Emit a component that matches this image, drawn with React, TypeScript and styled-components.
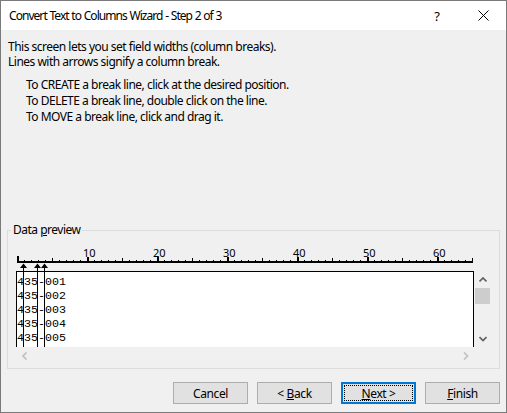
import React from "react";
import styled, { createGlobalStyle } from "styled-components";

const GlobalStyle = createGlobalStyle`
  html, body { margin: 0; padding: 0; background: #ffffff; }
  body { font-family: "Noto Sans", "Segoe UI", sans-serif; font-size: 12px; letter-spacing: -0.5px; color: #000; }
  * { box-sizing: border-box; }
`;

const Window = styled.div`
  width: 507px;
  height: 413px;
  border: 1px solid #7a7a7a;
  background: #f0f0f0;
  display: flex;
  flex-direction: column;
`;

const TitleBar = styled.div`
  height: 29px;
  flex-shrink: 0;
  background: #ffffff;
  display: flex;
  align-items: center;
`;

const Title = styled.div`
  flex: 1;
  padding-left: 8px;
  font-size: 12px;
  letter-spacing: -0.95px;
  word-spacing: 0.5px;
  white-space: nowrap;
`;

const TitleButton = styled.div`
  width: 46px;
  height: 29px;
  display: flex;
  align-items: center;
  justify-content: center;
  font-size: 13px;
  letter-spacing: 0;
  color: #000;
`;

const Content = styled.div`
  flex: 1;
  display: flex;
  flex-direction: column;
  padding: 9px 6px 8px 6px;
`;

const Intro = styled.div`
  padding-left: 1px;
`;

const Line = styled.div<{ $h: number }>`
  height: ${(p) => p.$h}px;
  line-height: ${(p) => p.$h}px;
  white-space: nowrap;
`;

const Instructions = styled.div`
  margin-top: 8px;
  padding-left: 19px;
`;

const Group = styled.fieldset`
  margin: auto 0 0 0;
  padding: 0;
  border: 1px solid #dcdcdc;
  min-width: 0;
`;

const Legend = styled.legend`
  margin-left: 3px;
  padding: 0 2px;
  line-height: 16px;
  font-size: 12px;
`;

const GroupInner = styled.div`
  padding: 8px 8px 4px 8px;
`;

const PreviewGrid = styled.div`
  display: grid;
  grid-template-columns: 458px 17px;
  grid-template-rows: 76px 17px;
`;

const PreviewBox = styled.div`
  position: relative;
  background: #ffffff;
  border: 1px solid #000;
  border-bottom: none;
  padding-top: 3px;
  overflow: hidden;
`;

const Row = styled.div`
  font-family: "Liberation Mono", "Courier New", monospace;
  font-size: 11.667px;
  letter-spacing: 0;
  line-height: 14px;
  height: 14px;
  white-space: pre;
`;

const BreakLine = styled.div<{ $left: number }>`
  position: absolute;
  top: 0;
  bottom: 0;
  left: ${(p) => p.$left}px;
  width: 1px;
  background: #000;
`;

const VScroll = styled.div`
  display: flex;
  flex-direction: column;
  background: #f0f0f0;
`;

const HScroll = styled.div`
  display: flex;
  background: #f0f0f0;
`;

const ScrollButton = styled.div`
  width: 17px;
  height: 17px;
  display: flex;
  align-items: center;
  justify-content: center;
  flex-shrink: 0;
`;

const Thumb = styled.div`
  height: 16px;
  margin: 0 1px;
  background: #cdcdcd;
`;

const Track = styled.div`
  flex: 1;
`;

const Corner = styled.div`
  background: #f0f0f0;
`;

const ButtonRow = styled.div`
  margin-top: 13px;
  display: flex;
  justify-content: flex-end;
  gap: 9px;
`;

const Button = styled.button<{ $default?: boolean }>`
  position: relative;
  width: 75px;
  height: 22px;
  padding: 0;
  font-family: "Noto Sans", "Segoe UI", sans-serif;
  font-size: 12px;
  letter-spacing: -0.4px;
  color: #000;
  background: #e1e1e1;
  border: ${(p) => (p.$default ? "2px solid #0078d7" : "1px solid #adadad")};
  display: flex;
  align-items: center;
  justify-content: center;
  ${(p) =>
    p.$default
      ? `&::after { content: ""; position: absolute; inset: 1px; border: 1px dotted #000; }`
      : ""}
`;

const ButtonLabel = styled.span`
  white-space: pre;
`;

const Chevron = ({ dir, color }: { dir: "up" | "down" | "left" | "right"; color: string }) => {
  const pts: Record<string, string> = {
    up: "0.5,4.5 4,1 7.5,4.5",
    down: "0.5,1 4,4.5 7.5,1",
    left: "4.5,0.5 1,4 4.5,7.5",
    right: "1,0.5 4.5,4 1,7.5",
  };
  const vertical = dir === "up" || dir === "down";
  return (
    <svg width={vertical ? 8 : 6} height={vertical ? 6 : 8} viewBox={vertical ? "0 0 8 6" : "0 0 6 8"}>
      <polyline points={pts[dir]} fill="none" stroke={color} strokeWidth={1.7} />
    </svg>
  );
};

const breaks = [1, 3, 4];
const rows = ["435-001", "435-002", "435-003", "435-004", "435-005"];

const Ruler = () => {
  const ticks = [];
  for (let c = 0; c <= 65; c++) {
    const x = 1 + 7 * c;
    if (c === 0) ticks.push(<rect key={c} x={x} y={10} width={2} height={5} />);
    else if (c % 10 === 0) ticks.push(<rect key={c} x={x} y={11} width={2} height={4} />);
    else if (c % 5 === 0) ticks.push(<rect key={c} x={x} y={12} width={1} height={3} />);
    else ticks.push(<rect key={c} x={x} y={14} width={1} height={1} />);
  }
  const labels = [10, 20, 30, 40, 50, 60].map((n) => (
    <text
      key={n}
      x={1 + 7 * n - 4}
      y={11}
      fontFamily='"Noto Sans", sans-serif'
      fontSize={11}
      letterSpacing={0}
      fill="#000"
    >
      {n}
    </text>
  ));
  return (
    <svg width={458} height={25} style={{ display: "block" }}>
      <g fill="#000">
        <rect x={1} y={15} width={456} height={2} />
        {ticks}
        {breaks.map((b) => {
          const x = 7 * b;
          return (
            <g key={b}>
              <polygon points={`${x + 0.5},17.5 ${x - 3},22 ${x + 4},22`} />
              <rect x={x} y={18} width={1} height={7} />
            </g>
          );
        })}
      </g>
      {labels}
    </svg>
  );
};

export default function App() {
  return (
    <>
      <GlobalStyle />
      <Window>
        <TitleBar>
          <Title>Convert Text to Columns Wizard - Step 2 of 3</Title>
          <TitleButton>?</TitleButton>
          <TitleButton>
            <svg width="11" height="11" viewBox="0 0 11 11">
              <path d="M0.5 0.5 L10.5 10.5 M10.5 0.5 L0.5 10.5" stroke="#000" strokeWidth="1" />
            </svg>
          </TitleButton>
        </TitleBar>
        <Content>
          <Intro>
            <Line $h={15}>This screen lets you set field widths (column breaks).</Line>
            <Line $h={15}>Lines with arrows signify a column break.</Line>
          </Intro>
          <Instructions>
            <Line $h={16}>To CREATE a break line, click at the desired position.</Line>
            <Line $h={16}>To DELETE a break line, double click on the line.</Line>
            <Line $h={16}>To MOVE a break line, click and drag it.</Line>
          </Instructions>
          <Group>
            <Legend>
              Data <u>p</u>review
            </Legend>
            <GroupInner>
              <Ruler />
              <PreviewGrid>
                <PreviewBox>
                  {rows.map((r) => (
                    <Row key={r}>{r}</Row>
                  ))}
                  {breaks.map((b) => (
                    <BreakLine key={b} $left={7 * b - 1} />
                  ))}
                </PreviewBox>
                <VScroll>
                  <ScrollButton>
                    <Chevron dir="up" color="#606060" />
                  </ScrollButton>
                  <Thumb />
                  <Track />
                  <ScrollButton>
                    <Chevron dir="down" color="#606060" />
                  </ScrollButton>
                </VScroll>
                <HScroll>
                  <ScrollButton>
                    <Chevron dir="left" color="#c0c0c0" />
                  </ScrollButton>
                  <Track />
                  <ScrollButton>
                    <Chevron dir="right" color="#c0c0c0" />
                  </ScrollButton>
                </HScroll>
                <Corner />
              </PreviewGrid>
            </GroupInner>
          </Group>
          <ButtonRow>
            <Button>
              <ButtonLabel>Cancel</ButtonLabel>
            </Button>
            <Button>
              <ButtonLabel>
                {"< "}
                <u>B</u>ack
              </ButtonLabel>
            </Button>
            <Button $default>
              <ButtonLabel>
                <u>N</u>
                {"ext >"}
              </ButtonLabel>
            </Button>
            <Button>
              <ButtonLabel>
                <u>F</u>inish
              </ButtonLabel>
            </Button>
          </ButtonRow>
        </Content>
      </Window>
    </>
  );
}
